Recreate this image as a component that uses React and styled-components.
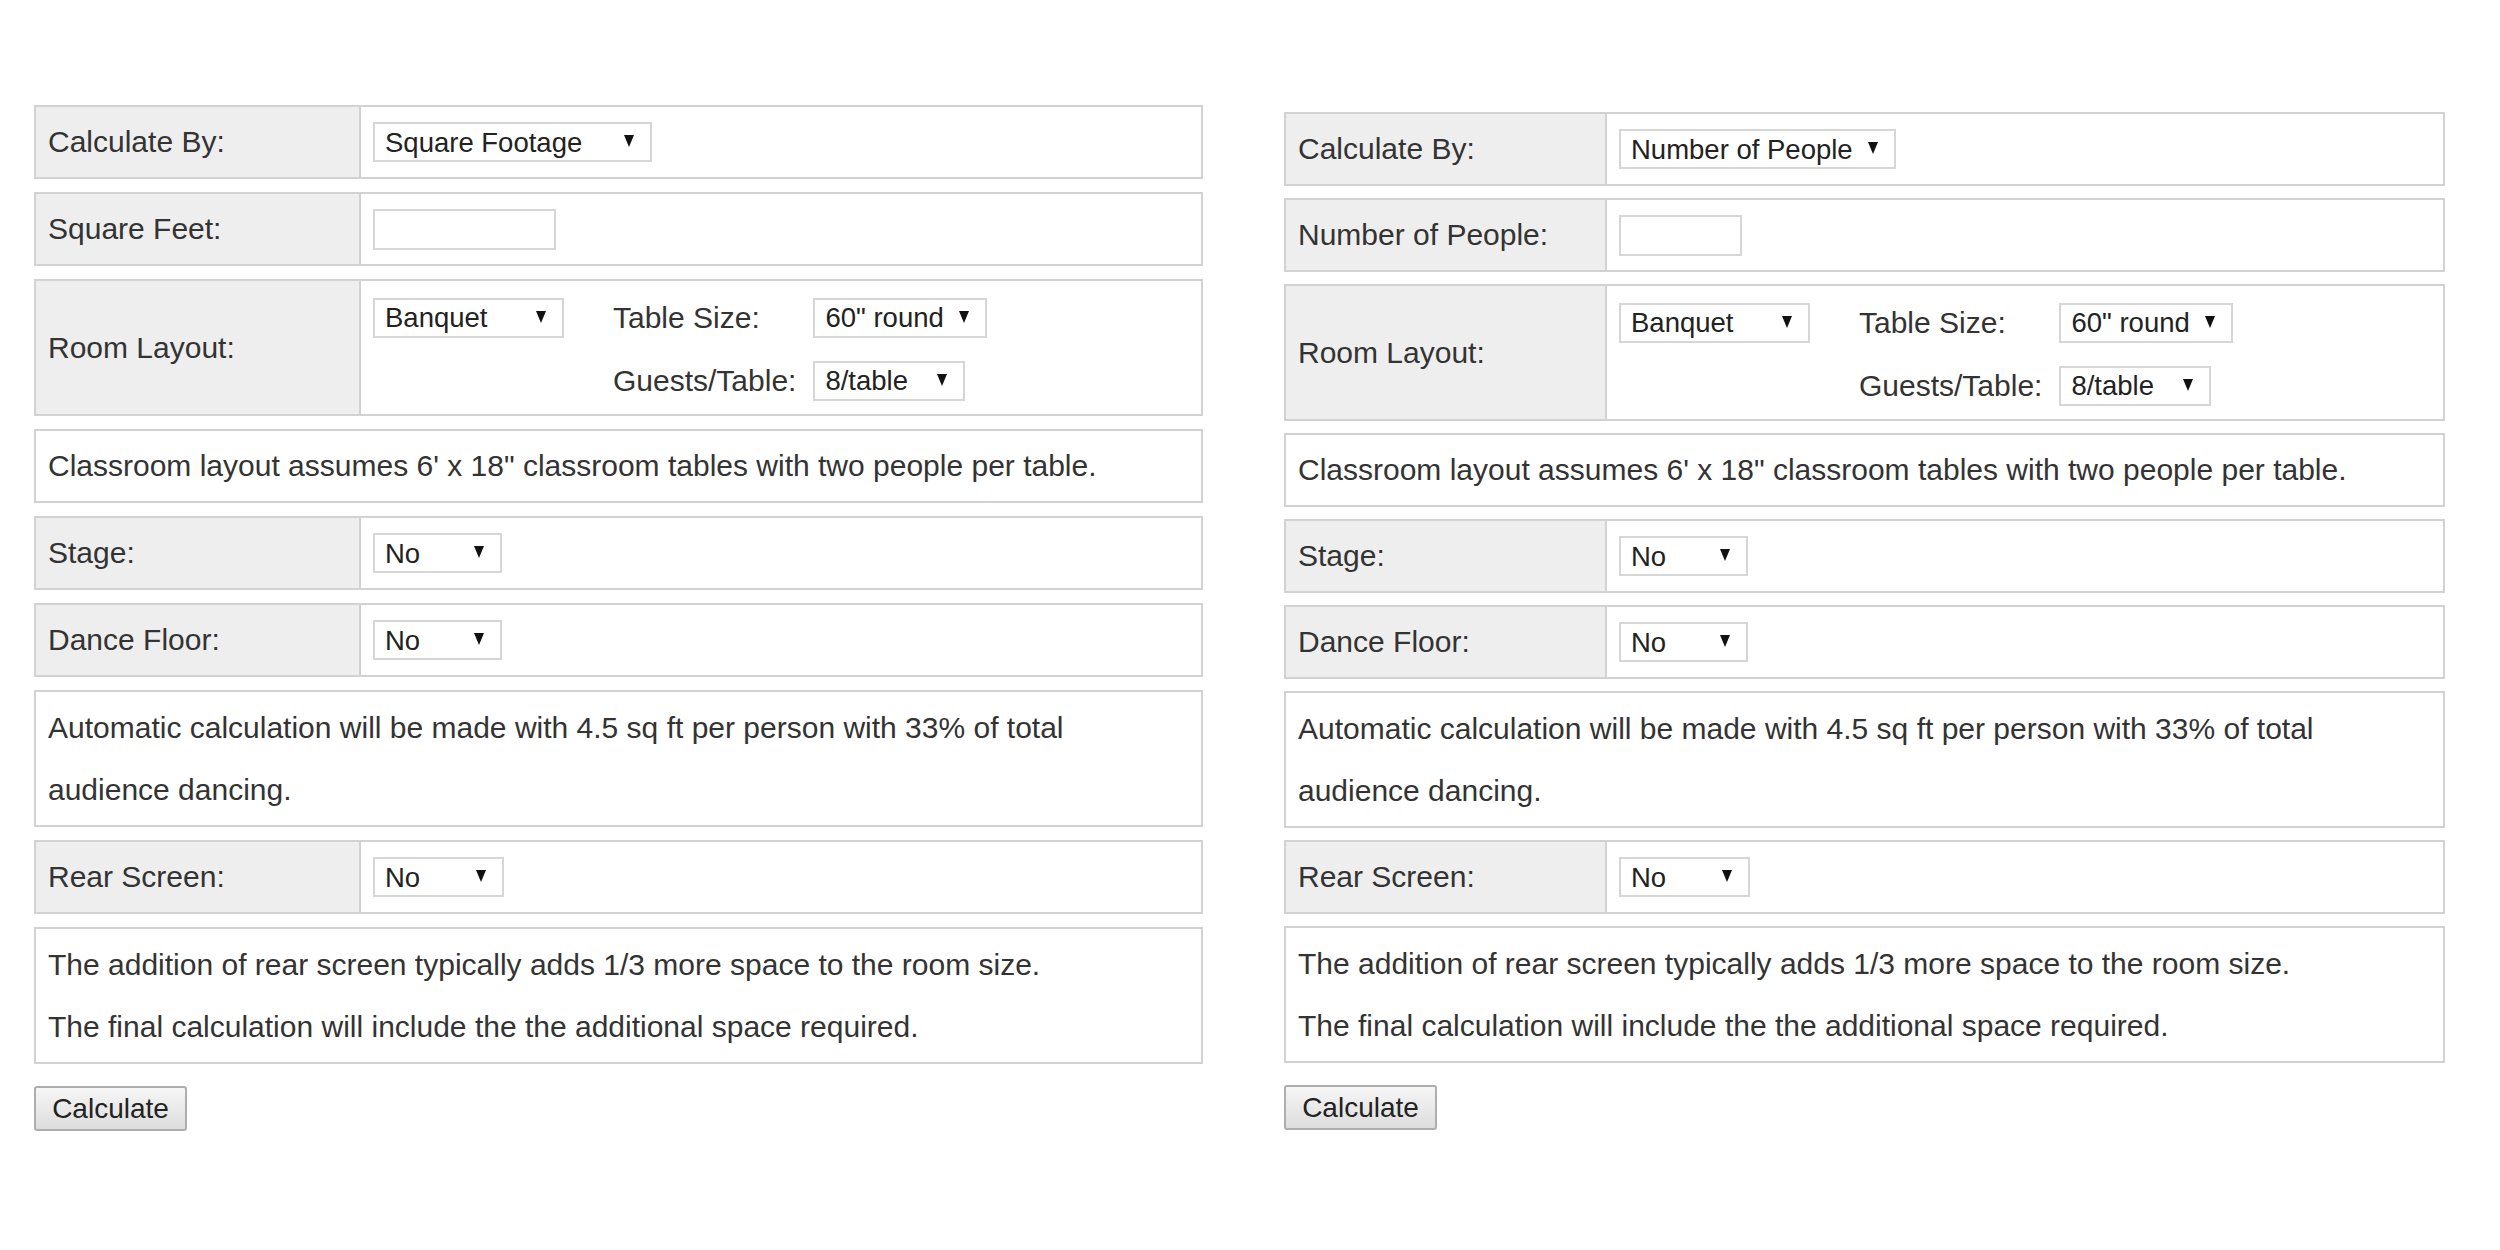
import React from "react";
import styled, { createGlobalStyle } from "styled-components";

const GlobalStyle = createGlobalStyle`
  html, body {
    margin: 0;
    padding: 0;
    background: #fff;
  }
  body {
    font-family: "Liberation Sans", Arial, sans-serif;
    color: #333;
  }
`;

const Page = styled.div`
  display: flex;
  align-items: flex-start;
  gap: 81px;
  padding: 105px 0 0 34px;
`;

const Calculator = styled.form`
  display: flex;
  flex-direction: column;
  width: ${(p) => p.width}px;
  margin-top: ${(p) => p.offset || 0}px;
`;

const Rows = styled.div`
  display: flex;
  flex-direction: column;
  gap: ${(p) => p.gap}px;
`;

const Row = styled.div`
  display: grid;
  grid-template-columns: ${(p) => p.labelWidth}px 1fr;
  min-height: ${(p) => (p.tall ? 137 : 74)}px;
  box-sizing: border-box;
  border: 2px solid #d2d2d2;
  background: #fff;
`;

const Label = styled.div`
  display: flex;
  align-items: center;
  padding: 0 12px;
  background: #eee;
  border-right: 2px solid #d2d2d2;
  font-size: 30px;
  color: #333;
`;

const Value = styled.div`
  display: flex;
  align-items: center;
  padding: 0 12px;
`;

const Note = styled.div`
  display: flex;
  flex-direction: column;
  justify-content: center;
  min-height: ${(p) => (p.tall ? 137 : 74)}px;
  box-sizing: border-box;
  border: 2px solid #d2d2d2;
  padding: 0 12px;
  font-size: 30px;
  line-height: 62px;
  color: #333;

  p {
    margin: 0;
  }
`;

const LayoutGrid = styled.div`
  display: grid;
  grid-template-columns: 240px auto auto;
  row-gap: 23px;
  align-items: center;
  justify-items: start;
  padding: 15px 0 12px;
`;

const SubLabel = styled.span`
  font-size: 30px;
  color: #333;
  padding-right: 17px;
`;

const SelectWrap = styled.span`
  position: relative;
  display: inline-block;

  &::after {
    content: "";
    position: absolute;
    right: 18px;
    top: 50%;
    margin-top: -7px;
    border-left: 5px solid transparent;
    border-right: 5px solid transparent;
    border-top: 12px solid #111;
    pointer-events: none;
  }
`;

const Select = styled.select`
  appearance: none;
  -webkit-appearance: none;
  display: block;
  width: ${(p) => p.w}px;
  height: 40px;
  box-sizing: border-box;
  border: 2px solid #d6d6d6;
  border-radius: 0;
  background: #fff;
  padding: 0 10px;
  font-family: "Liberation Sans", Arial, sans-serif;
  font-size: 27.5px;
  color: #222;
  outline: none;
`;

const TextInput = styled.input`
  width: ${(p) => p.w}px;
  height: 41px;
  box-sizing: border-box;
  border: 2px solid #d6d6d6;
  background: #fff;
  padding: 0 8px;
  font-size: 27px;
  font-family: "Liberation Sans", Arial, sans-serif;
  outline: none;
`;

const Button = styled.button`
  align-self: flex-start;
  margin-top: 22px;
  width: 153px;
  height: 45px;
  box-sizing: border-box;
  border: 2px solid #aeaeae;
  border-radius: 3px;
  background: linear-gradient(#f6f6f6, #dddddd);
  font-family: "Liberation Sans", Arial, sans-serif;
  font-size: 28px;
  color: #222;
  padding: 0;
  cursor: pointer;
`;

function Dropdown({ w, value, options }) {
  return (
    <SelectWrap>
      <Select w={w} defaultValue={value}>
        {options.map((o) => (
          <option key={o}>{o}</option>
        ))}
      </Select>
    </SelectWrap>
  );
}

const yesNo = ["No", "Yes"];

function CalcForm({ width, labelWidth, offset, gap, mode }) {
  const byPeople = mode === "people";
  return (
    <Calculator width={width} offset={offset} onSubmit={(e) => e.preventDefault()}>
      <Rows gap={gap}>
        <Row labelWidth={labelWidth}>
          <Label>Calculate By:</Label>
          <Value>
            <Dropdown
              w={byPeople ? 277 : 279}
              value={byPeople ? "Number of People" : "Square Footage"}
              options={["Square Footage", "Number of People"]}
            />
          </Value>
        </Row>
        <Row labelWidth={labelWidth}>
          <Label>{byPeople ? "Number of People:" : "Square Feet:"}</Label>
          <Value>
            <TextInput w={byPeople ? 123 : 183} type="text" />
          </Value>
        </Row>
        <Row labelWidth={labelWidth} tall>
          <Label>Room Layout:</Label>
          <Value>
            <LayoutGrid>
              <Dropdown w={191} value="Banquet" options={["Banquet", "Classroom", "Theater"]} />
              <SubLabel>Table Size:</SubLabel>
              <Dropdown w={174} value={'60" round'} options={['60" round', '72" round']} />
              <span />
              <SubLabel>Guests/Table:</SubLabel>
              <Dropdown w={152} value="8/table" options={["8/table", "10/table"]} />
            </LayoutGrid>
          </Value>
        </Row>
        <Note>Classroom layout assumes 6' x 18" classroom tables with two people per table.</Note>
        <Row labelWidth={labelWidth}>
          <Label>Stage:</Label>
          <Value>
            <Dropdown w={129} value="No" options={yesNo} />
          </Value>
        </Row>
        <Row labelWidth={labelWidth}>
          <Label>Dance Floor:</Label>
          <Value>
            <Dropdown w={129} value="No" options={yesNo} />
          </Value>
        </Row>
        <Note tall>
          Automatic calculation will be made with 4.5 sq ft per person with 33% of total audience dancing.
        </Note>
        <Row labelWidth={labelWidth}>
          <Label>Rear Screen:</Label>
          <Value>
            <Dropdown w={131} value="No" options={yesNo} />
          </Value>
        </Row>
        <Note tall>
          <p>The addition of rear screen typically adds 1/3 more space to the room size.</p>
          <p>The final calculation will include the the additional space required.</p>
        </Note>
      </Rows>
      <Button type="submit">Calculate</Button>
    </Calculator>
  );
}

export default function App() {
  return (
    <>
      <GlobalStyle />
      <Page>
        <CalcForm width={1169} labelWidth={325} gap={13} mode="footage" />
        <CalcForm width={1161} labelWidth={321} offset={7} gap={12} mode="people" />
      </Page>
    </>
  );
}
